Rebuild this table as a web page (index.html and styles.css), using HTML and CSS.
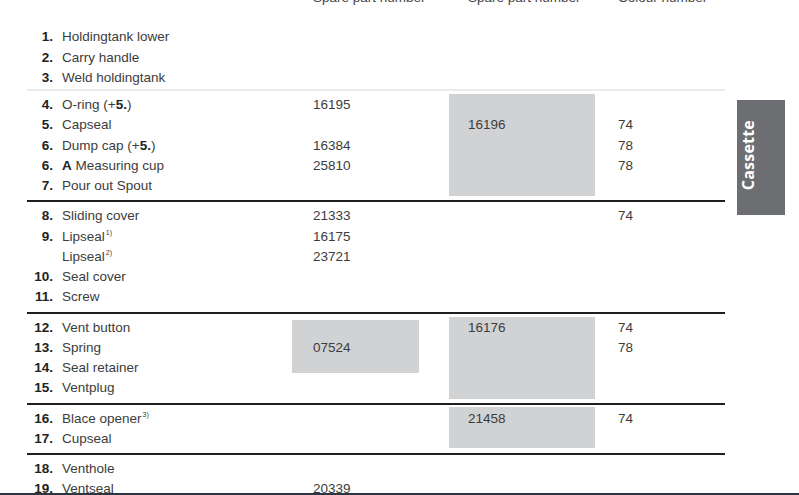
FILE: index.html
```html
<!DOCTYPE html>
<html>
<head>
<meta charset="utf-8">
<link rel="stylesheet" href="styles.css">
</head>
<body>
<div class="page">
  <div class="table">
    <div class="head">
      <span class="c-p1">Spare part number</span>
      <span class="c-p2">Spare part number</span>
      <span class="c-col">Colour number</span>
    </div>

    <div class="sec sec-first">
      <b class="num">1.</b><span class="name">Holdingtank lower</span>
      <b class="num">2.</b><span class="name">Carry handle</span>
      <b class="num">3.</b><span class="name">Weld holdingtank</span>
    </div>

    <div class="sec sec-faint">
      <div class="box box-a"><span class="box-text">16196</span></div>
      <b class="num r1">4.</b><span class="name r1">O-ring (+<b>5.</b>)</span><span class="c-p1 r1">16195</span>
      <b class="num r2">5.</b><span class="name r2">Capseal</span>
      <b class="num r3">6.</b><span class="name r3">Dump cap (+<b>5.</b>)</span><span class="c-p1 r3">16384</span>
      <b class="num r4">6.</b><span class="name r4"><b>A</b> Measuring cup</span><span class="c-p1 r4">25810</span>
      <b class="num r5">7.</b><span class="name r5">Pour out Spout</span>
      <span class="c-col r2">74</span>
      <span class="c-col r3">78</span>
      <span class="c-col r4">78</span>
    </div>

    <div class="sec">
      <b class="num r1">8.</b><span class="name r1">Sliding cover</span><span class="c-p1 r1">21333</span><span class="c-col r1">74</span>
      <b class="num r2">9.</b><span class="name r2">Lipseal<sup>1)</sup></span><span class="c-p1 r2">16175</span>
      <b class="num r3"></b><span class="name r3">Lipseal<sup>2)</sup></span><span class="c-p1 r3">23721</span>
      <b class="num r4">10.</b><span class="name r4">Seal cover</span>
      <b class="num r5">11.</b><span class="name r5">Screw</span>
    </div>

    <div class="sec">
      <div class="box box-b"><span class="box-text">07524</span></div>
      <div class="box box-c"><span class="box-text">16176</span></div>
      <b class="num r1">12.</b><span class="name r1">Vent button</span>
      <b class="num r2">13.</b><span class="name r2">Spring</span>
      <b class="num r3">14.</b><span class="name r3">Seal retainer</span>
      <b class="num r4">15.</b><span class="name r4">Ventplug</span>
      <span class="c-col r1">74</span>
      <span class="c-col r2">78</span>
    </div>

    <div class="sec">
      <div class="box box-d"><span class="box-text">21458</span></div>
      <b class="num r1">16.</b><span class="name r1">Blace opener<sup>3)</sup></span>
      <b class="num r2">17.</b><span class="name r2">Cupseal</span>
      <span class="c-col r1">74</span>
    </div>

    <div class="sec">
      <b class="num r1">18.</b><span class="name r1">Venthole</span>
      <b class="num r2">19.</b><span class="name r2">Ventseal</span><span class="c-p1 r2">20339</span>
    </div>
  </div>

  <div class="tab"><span class="tab-text">Cassette</span></div>
</div>
<div class="edge"></div>
</body>
</html>
```

FILE: styles.css
```css
html, body {
  margin: 0;
  padding: 0;
  background: #ffffff;
  overflow: hidden;
}

body {
  width: 799px;
  height: 495px;
  font-family: "Liberation Sans", Arial, sans-serif;
  font-size: 13.5px;
  color: #3c3c3c;
}

.page {
  display: flex;
  align-items: flex-start;
}

.table {
  width: 698px;
  margin-left: 27px;
  margin-top: -12px;
}

.head,
.sec {
  display: grid;
  grid-template-columns: 26px 239px 157px 169px 107px;
  grid-auto-rows: 20.25px;
  line-height: 20.25px;
  white-space: nowrap;
}

.head {
  color: #444;
}

.head .c-p1 { grid-column: 3; padding-left: 21px; }
.head .c-p2 { grid-column: 4; padding-left: 19px; }
.head .c-col { grid-column: 5; }

.sec {
  padding: 4px 0;
  border-top: 2px solid #1e1e1e;
}

.sec-first {
  border-top: none;
  padding-top: 19px;
  padding-bottom: 1px;
}

.sec-faint {
  border-top: 2px solid #ececec;
}

.num {
  grid-column: 1;
  text-align: right;
  font-weight: bold;
  color: #222;
}

.name {
  grid-column: 2;
  padding-left: 9px;
}

.name b {
  color: #222;
}

.c-p1 {
  grid-column: 3;
  padding-left: 21px;
}

.c-col {
  grid-column: 5;
}

.r1 { grid-row: 1; }
.r2 { grid-row: 2; }
.r3 { grid-row: 3; }
.r4 { grid-row: 4; }
.r5 { grid-row: 5; }

sup {
  font-size: 7px;
  line-height: 0;
  vertical-align: 6px;
  margin-left: 1px;
}

.box {
  background: #d1d2d4;
  align-self: start;
  box-sizing: border-box;
}

.box-text {
  display: block;
}

.box-a {
  grid-column: 4;
  grid-row: 1 / 6;
  width: 146px;
  height: 102px;
  margin-top: -1px;
  padding-left: 19px;
  padding-top: 21.25px;
}

.box-b {
  grid-column: 3;
  grid-row: 1 / 4;
  width: 127px;
  height: 53px;
  margin-top: 2px;
  padding-left: 21px;
  padding-top: 18.25px;
}

.box-c {
  grid-column: 4;
  grid-row: 1 / 5;
  width: 146px;
  height: 82px;
  margin-top: -1px;
  padding-left: 19px;
  padding-top: 1px;
}

.box-d {
  grid-column: 4;
  grid-row: 1 / 3;
  width: 146px;
  height: 41px;
  margin-top: -2px;
  padding-left: 19px;
  padding-top: 2px;
}

.tab {
  width: 48px;
  height: 115px;
  margin-left: 12px;
  margin-top: 100px;
  background: #6d6e71;
  display: flex;
  align-items: center;
  padding-left: 3px;
  padding-bottom: 4px;
  box-sizing: border-box;
}

.tab-text {
  writing-mode: vertical-rl;
  transform: rotate(180deg);
  font-family: "Open Sans", "DejaVu Sans", sans-serif;
  font-weight: bold;
  font-size: 16px;
  line-height: 16px;
  color: #ffffff;
  letter-spacing: 0.2px;
}

.edge {
  position: fixed;
  left: 0;
  right: 0;
  bottom: 0;
  height: 2px;
  background: #2b3640;
}
```
